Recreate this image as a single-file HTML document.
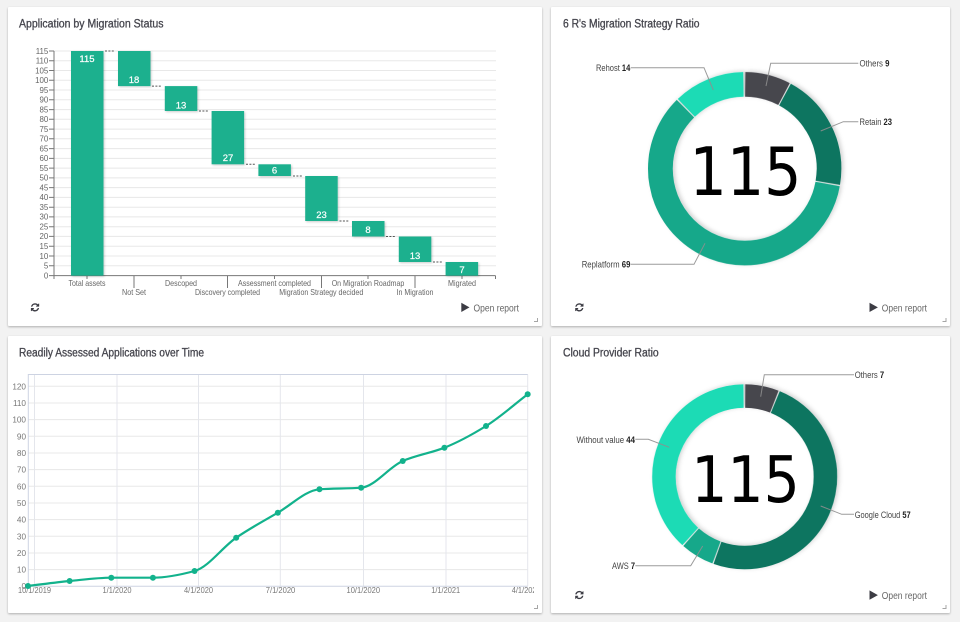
<!DOCTYPE html>
<html><head><meta charset="utf-8"><style>
html,body{margin:0;padding:0;width:960px;height:622px;overflow:hidden;background:#f2f2f2}
svg{position:absolute;left:0;top:0;filter:blur(.3px)}
.card{position:absolute;background:#fff;box-shadow:0 1px 2px rgba(0,0,0,.28);border-radius:1px}
text{font-family:"Liberation Sans",sans-serif}
.t{font-size:11.5px;fill:#45454d;stroke:#45454d;stroke-width:.3px}
.yl{font-size:7.9px;fill:#666;text-anchor:end}
.xl{font-size:8.2px;fill:#666;text-anchor:middle}
.bl{font-size:9.5px;fill:#fff;text-anchor:middle;stroke:#fff;stroke-width:.2px}
.lb{font-size:9px;fill:#444}
.lb tspan{font-weight:bold;fill:#222}
.or{font-size:9.8px;fill:#666}
.big{font-family:"DejaVu Sans",sans-serif;fill:#000;text-anchor:middle}
.ll{font-size:8.2px;fill:#777}
.lx{font-size:8.2px;fill:#777;text-anchor:middle}
</style></head><body>
<div class="card" style="left:8px;top:7px;width:534px;height:319px"></div>
<div class="card" style="left:551px;top:7px;width:399px;height:319px"></div>
<div class="card" style="left:8px;top:336px;width:534px;height:277px"></div>
<div class="card" style="left:551px;top:336px;width:399px;height:277px"></div>
<svg width="960" height="622" viewBox="0 0 960 622" xmlns="http://www.w3.org/2000/svg">
<defs>
<filter id="s" x="-20%" y="-20%" width="140%" height="140%"><feDropShadow dx="1" dy="2" stdDeviation="2" flood-color="#000" flood-opacity=".18"/></filter>
<filter id="bs" x="-20%" y="-20%" width="140%" height="140%"><feDropShadow dx="1" dy="1" stdDeviation="1" flood-color="#000" flood-opacity=".2"/></filter>
<clipPath id="lc"><rect x="0" y="580" width="534" height="20"/></clipPath>
<path id="ref" d="M1639 1056q0 5-1 7-64 268-268 434.5t-478 166.5q-146 0-282.5-55t-243.5-157l-129 129q-19 19-45 19t-45-19-19-45v-448q0-26 19-45t45-19h448q26 0 45 19t19 45-19 45l-137 137q71 66 161 102t187 36q134 0 250-65t186-179q11-17 53-117 8-23 30-23h192q13 0 22.5 9.5t9.5 22.5zm25-800v448q0 26-19 45t-45 19h-448q-26 0-45-19t-19-45 19-45l138-138q-148-137-349-137-134 0-250 65t-186 179q-11 17-53 117-8 23-30 23h-199q-13 0-22.5-9.5t-9.5-22.5v-7q65-268 270-434.5t480-166.5q146 0 284 55.5t245 156.5l130-129q19-19 45-19t45 19 19 45z" fill="#3c3c44"/>
</defs>

<!-- titles -->
<text class="t" x="19" y="27.7" textLength="144.5" lengthAdjust="spacingAndGlyphs">Application by Migration Status</text>
<text class="t" x="563" y="27.7" textLength="136.5" lengthAdjust="spacingAndGlyphs">6 R's Migration Strategy Ratio</text>
<text class="t" x="19" y="356.3" textLength="185" lengthAdjust="spacingAndGlyphs">Readily Assessed Applications over Time</text>
<text class="t" x="563" y="356.3" textLength="95.7" lengthAdjust="spacingAndGlyphs">Cloud Provider Ratio</text>

<!-- waterfall grid -->
<g stroke="#e8e8e8" stroke-width="1">
<path d="M54 51H496M54 60.8H496M54 70.5H496M54 80.3H496M54 90H496M54 99.8H496M54 109.6H496M54 119.3H496M54 129.1H496M54 138.8H496M54 148.6H496M54 158.4H496M54 168.1H496M54 177.9H496M54 187.6H496M54 197.4H496M54 207.2H496M54 216.9H496M54 226.7H496M54 236.4H496M54 246.2H496M54 256H496M54 265.8H496"/>
</g>
<g stroke="#777" stroke-width="1" fill="none">
<path d="M54 51V275.6M49 51H54M49 60.8H54M49 70.5H54M49 80.3H54M49 90H54M49 99.8H54M49 109.6H54M49 119.3H54M49 129.1H54M49 138.8H54M49 148.6H54M49 158.4H54M49 168.1H54M49 177.9H54M49 187.6H54M49 197.4H54M49 207.2H54M49 216.9H54M49 226.7H54M49 236.4H54M49 246.2H54M49 256H54M49 265.8H54M49 275.6H54"/>
<path d="M54 275.6H495.5M54 275.6V279M87 275.6V279M134 275.6V288M181 275.6V279M227.5 275.6V288M274.5 275.6V279M321.5 275.6V288M368 275.6V279M415 275.6V288M462 275.6V279M495.5 275.6V279"/>
</g>
<g>
<text class="yl" x="48.3" y="53.8">115</text><text class="yl" x="48.3" y="63.6">110</text><text class="yl" x="48.3" y="73.3">105</text><text class="yl" x="48.3" y="83.1">100</text><text class="yl" x="48.3" y="92.8">95</text><text class="yl" x="48.3" y="102.6">90</text><text class="yl" x="48.3" y="112.4">85</text><text class="yl" x="48.3" y="122.1">80</text><text class="yl" x="48.3" y="131.9">75</text><text class="yl" x="48.3" y="141.6">70</text><text class="yl" x="48.3" y="151.4">65</text><text class="yl" x="48.3" y="161.2">60</text><text class="yl" x="48.3" y="170.9">55</text><text class="yl" x="48.3" y="180.7">50</text><text class="yl" x="48.3" y="190.4">45</text><text class="yl" x="48.3" y="200.2">40</text><text class="yl" x="48.3" y="210">35</text><text class="yl" x="48.3" y="219.7">30</text><text class="yl" x="48.3" y="229.5">25</text><text class="yl" x="48.3" y="239.2">20</text><text class="yl" x="48.3" y="249">15</text><text class="yl" x="48.3" y="258.8">10</text><text class="yl" x="48.3" y="268.6">5</text><text class="yl" x="48.3" y="278.4">0</text>
</g>
<!-- bars -->
<g fill="#1cb08e" filter="url(#bs)">
<rect x="71" y="51" width="32.5" height="224.6"/>
<rect x="118" y="51" width="32.5" height="35.1"/>
<rect x="164.8" y="86.1" width="32.5" height="24.9"/>
<rect x="211.6" y="111" width="32.5" height="53.3"/>
<rect x="258.4" y="164.3" width="32.5" height="11.7"/>
<rect x="305.2" y="176" width="32.5" height="45"/>
<rect x="352" y="221" width="32.5" height="15.5"/>
<rect x="398.8" y="236.5" width="32.5" height="25.5"/>
<rect x="445.6" y="262" width="32.5" height="13.6"/>
</g>
<path d="M105 51H114M152 86.1H161M199 111H208M246 164.3H255M293 176H302M339.5 221H349M386 236.5H395M433 262H442" stroke="#555" stroke-width="1" stroke-dasharray="2 1.4" fill="none"/>
<text class="bl" x="87" y="61.8">115</text>
<text class="bl" x="134" y="83">18</text>
<text class="bl" x="181" y="108.4">13</text>
<text class="bl" x="228" y="161.2">27</text>
<text class="bl" x="274.5" y="173.6">6</text>
<text class="bl" x="321.5" y="218">23</text>
<text class="bl" x="368" y="233">8</text>
<text class="bl" x="415" y="259.2">13</text>
<text class="bl" x="462" y="273">7</text>
<text class="xl" x="87" y="286" textLength="37" lengthAdjust="spacingAndGlyphs">Total assets</text>
<text class="xl" x="134" y="295" textLength="24" lengthAdjust="spacingAndGlyphs">Not Set</text>
<text class="xl" x="181" y="286" textLength="32" lengthAdjust="spacingAndGlyphs">Descoped</text>
<text class="xl" x="227.5" y="295" textLength="65" lengthAdjust="spacingAndGlyphs">Discovery completed</text>
<text class="xl" x="274.5" y="286" textLength="73" lengthAdjust="spacingAndGlyphs">Assessment completed</text>
<text class="xl" x="321.3" y="295" textLength="84" lengthAdjust="spacingAndGlyphs">Migration Strategy decided</text>
<text class="xl" x="368" y="286" textLength="72.6" lengthAdjust="spacingAndGlyphs">On Migration Roadmap</text>
<text class="xl" x="415" y="295" textLength="37" lengthAdjust="spacingAndGlyphs">In Migration</text>
<text class="xl" x="462" y="286" textLength="28" lengthAdjust="spacingAndGlyphs">Migrated</text>

<!-- donut 1 -->
<g filter="url(#s)" transform="rotate(-90 744.7 168.7)" fill="none" stroke-width="24.7">
<circle cx="744.7" cy="168.7" r="84.35" pathLength="115" stroke="#46464e" stroke-dasharray="8.75 106.25" stroke-dashoffset="-.12"/>
<circle cx="744.7" cy="168.7" r="84.35" pathLength="115" stroke="#0e7560" stroke-dasharray="22.75 92.25" stroke-dashoffset="-9.12"/>
<circle cx="744.7" cy="168.7" r="84.35" pathLength="115" stroke="#17a88a" stroke-dasharray="68.75 46.25" stroke-dashoffset="-32.12"/>
<circle cx="744.7" cy="168.7" r="84.35" pathLength="115" stroke="#1bdbb5" stroke-dasharray="13.75 101.25" stroke-dashoffset="-101.12"/>
</g>
<g fill="none" stroke="#8f8f8f" stroke-width="1" opacity=".9">
<path d="M766 86L770.7 63.3H858.3"/>
<path d="M820.7 131L843.3 121.7H858.3"/>
<path d="M713.3 90L704 67.7H630.7"/>
<path d="M705 243.3L694 264.3H630.7"/>
</g>
<text class="big" x="745.5" y="195" font-size="66.5" textLength="112" lengthAdjust="spacingAndGlyphs">115</text>
<text class="lb" x="859.5" y="66.5" textLength="30" lengthAdjust="spacingAndGlyphs">Others <tspan>9</tspan></text>
<text class="lb" x="859.5" y="125" textLength="32.5" lengthAdjust="spacingAndGlyphs">Retain <tspan>23</tspan></text>
<text class="lb" x="596" y="71" textLength="34.3" lengthAdjust="spacingAndGlyphs">Rehost <tspan>14</tspan></text>
<text class="lb" x="581.7" y="267.5" textLength="48.7" lengthAdjust="spacingAndGlyphs">Replatform <tspan>69</tspan></text>

<!-- donut 2 -->
<g filter="url(#s)" transform="rotate(-90 744.7 476.8)" fill="none" stroke-width="23.5">
<circle cx="744.7" cy="476.8" r="80.75" pathLength="115" stroke="#46464e" stroke-dasharray="6.75 108.25" stroke-dashoffset="-.12"/>
<circle cx="744.7" cy="476.8" r="80.75" pathLength="115" stroke="#0e7560" stroke-dasharray="56.75 58.25" stroke-dashoffset="-7.12"/>
<circle cx="744.7" cy="476.8" r="80.75" pathLength="115" stroke="#17a88a" stroke-dasharray="6.75 108.25" stroke-dashoffset="-64.12"/>
<circle cx="744.7" cy="476.8" r="80.75" pathLength="115" stroke="#1bdbb5" stroke-dasharray="43.75 71.25" stroke-dashoffset="-71.12"/>
</g>
<g fill="none" stroke="#8f8f8f" stroke-width="1" opacity=".9">
<path d="M760.7 396.7L764.3 374.7H854"/>
<path d="M820.7 506L841.7 514.3H854"/>
<path d="M702.7 546L690.7 565.7H635.3"/>
<path d="M669.3 447.3L648.3 439.3H635.3"/>
</g>
<text class="big" x="745.5" y="502" font-size="64.5" textLength="108.5" lengthAdjust="spacingAndGlyphs">115</text>
<text class="lb" x="854.7" y="378" textLength="29.5" lengthAdjust="spacingAndGlyphs">Others <tspan>7</tspan></text>
<text class="lb" x="854.7" y="518" textLength="56" lengthAdjust="spacingAndGlyphs">Google Cloud <tspan>57</tspan></text>
<text class="lb" x="612" y="569" textLength="23" lengthAdjust="spacingAndGlyphs">AWS <tspan>7</tspan></text>
<text class="lb" x="576.5" y="443" textLength="58.5" lengthAdjust="spacingAndGlyphs">Without value <tspan>44</tspan></text>

<!-- line chart -->
<g stroke="#e8e8e8" stroke-width="1" fill="none">
<path d="M28 386.3H527.7M28 403H527.7M28 419.6H527.7M28 436.3H527.7M28 453H527.7M28 469.6H527.7M28 486.3H527.7M28 503H527.7M28 519.6H527.7M28 536.3H527.7M28 553H527.7M28 569.6H527.7"/>
</g>
<path d="M34.5 374.5V586M117 374.5V586M198.5 374.5V586M280.3 374.5V586M363.5 374.5V586M446 374.5V586M527.7 374.5V586" stroke="#e4e6ec" stroke-width="1" fill="none"/>
<path d="M28.3 586.3V374.5H527.7M28.3 586.3H527.7" stroke="#cdd3e2" stroke-width="1" fill="none"/>
<text class="ll" x="26" y="389.3" text-anchor="end">120</text>
<text class="ll" x="26" y="406" text-anchor="end">110</text>
<text class="ll" x="26" y="422.6" text-anchor="end">100</text>
<text class="ll" x="26" y="439.3" text-anchor="end">90</text>
<text class="ll" x="26" y="456" text-anchor="end">80</text>
<text class="ll" x="26" y="472.6" text-anchor="end">70</text>
<text class="ll" x="26" y="489.3" text-anchor="end">60</text>
<text class="ll" x="26" y="506" text-anchor="end">50</text>
<text class="ll" x="26" y="522.6" text-anchor="end">40</text>
<text class="ll" x="26" y="539.3" text-anchor="end">30</text>
<text class="ll" x="26" y="556" text-anchor="end">20</text>
<text class="ll" x="26" y="572.6" text-anchor="end">10</text>
<text class="ll" x="26" y="589" text-anchor="end">0</text>
<g clip-path="url(#lc)">
<text class="lx" x="34.5" y="593" textLength="33" lengthAdjust="spacingAndGlyphs">10/1/2019</text>
<text class="lx" x="117" y="593" textLength="29" lengthAdjust="spacingAndGlyphs">1/1/2020</text>
<text class="lx" x="198.5" y="593" textLength="29" lengthAdjust="spacingAndGlyphs">4/1/2020</text>
<text class="lx" x="280.5" y="593" textLength="29.5" lengthAdjust="spacingAndGlyphs">7/1/2020</text>
<text class="lx" x="363.3" y="593" textLength="33.5" lengthAdjust="spacingAndGlyphs">10/1/2020</text>
<text class="lx" x="445.7" y="593" textLength="29" lengthAdjust="spacingAndGlyphs">1/1/2021</text>
<text class="ll" x="511.7" y="593" textLength="29" lengthAdjust="spacingAndGlyphs">4/1/2021</text>
</g>
<path d="M28 586C41.88 584.33 55.76 582.33 69.64 581C83.52 579.67 97.4 577.7 111.28 577.7C125.16 577.7 139.04 577.7 152.92 577.7C166.8 577.7 180.68 574.73 194.56 571C208.44 567.27 222.32 547.23 236.2 537.7C250.08 528.17 263.96 520.77 277.84 512.7C291.72 504.63 305.6 490.3 319.48 489.3C333.36 488.3 347.24 488.7 361.12 487.7C375 486.7 388.88 466.93 402.76 461C416.64 455.07 430.52 453.2 444.4 447.7C458.28 442.2 472.16 434.6 486.04 426C499.92 417.4 513.8 404.87 527.68 394.3" fill="none" stroke="#12b28c" stroke-width="2.2"/>
<g fill="#12b28c">
<circle cx="28" cy="586" r="3"/><circle cx="69.64" cy="581" r="3"/><circle cx="111.28" cy="577.7" r="3"/><circle cx="152.92" cy="577.7" r="3"/><circle cx="194.56" cy="571" r="3"/><circle cx="236.2" cy="537.7" r="3"/><circle cx="277.84" cy="512.7" r="3"/><circle cx="319.48" cy="489.3" r="3"/><circle cx="361.12" cy="487.7" r="3"/><circle cx="402.76" cy="461" r="3"/><circle cx="444.4" cy="447.7" r="3"/><circle cx="486.04" cy="426" r="3"/><circle cx="527.68" cy="394.3" r="3"/>
</g>

<!-- refresh icons -->
<use href="#ref" transform="translate(30.2 302.5) scale(.0054)"/>
<use href="#ref" transform="translate(574.5 302.5) scale(.0054)"/>
<use href="#ref" transform="translate(574.5 590.2) scale(.0054)"/>

<!-- open report -->
<path d="M461.3 302.7L469.5 307.4L461.3 312Z" fill="#3c3c44"/>
<text class="or" x="473.5" y="311.3" textLength="45.5" lengthAdjust="spacingAndGlyphs">Open report</text>
<path d="M869.5 302.7L877.9 307.4L869.5 312Z" fill="#3c3c44"/>
<text class="or" x="881.8" y="311.3" textLength="45.2" lengthAdjust="spacingAndGlyphs">Open report</text>
<path d="M869.5 590.4L877.9 595.1L869.5 599.7Z" fill="#3c3c44"/>
<text class="or" x="881.8" y="599" textLength="45.2" lengthAdjust="spacingAndGlyphs">Open report</text>

<!-- resize handles -->
<g fill="none" stroke="#a6a6a6" stroke-width="1">
<path d="M537.5 318V321.5H534"/>
<path d="M946 318V321.5H942.5"/>
<path d="M537.5 605V608.5H534"/>
<path d="M946 605V608.5H942.5"/>
</g>
</svg>
</body></html>
